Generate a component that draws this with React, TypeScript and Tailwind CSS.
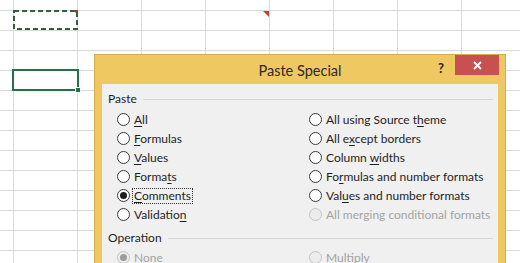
import React from "react";

type Item = { label: React.ReactNode; checked?: boolean; disabled?: boolean; focus?: boolean };

function Radio({ checked, disabled }: { checked?: boolean; disabled?: boolean }) {
  return (
    <span
      className={`flex h-[13px] w-[13px] shrink-0 items-center justify-center rounded-full border ${
        disabled ? "border-[#c4c4c4] bg-[#ececec]" : "border-[#3a3a3a] bg-white"
      }`}
    >
      {checked && (
        <span className={`h-[7px] w-[7px] rounded-full ${disabled ? "bg-[#9c9c9c]" : "bg-[#1c1c1c]"}`} />
      )}
    </span>
  );
}

function Option({ item }: { item: Item }) {
  return (
    <div className="flex h-[19px] items-center gap-[4px] whitespace-nowrap">
      <Radio checked={item.checked} disabled={item.disabled} />
      <span
        className={`leading-[14px] ${item.disabled ? "text-[#a3a3a3]" : "text-[#1e1e1e]"} ${
          item.focus ? "outline outline-1 outline-dotted outline-[#333] outline-offset-0 px-[1px] -ml-[1px]" : ""
        }`}
      >
        {item.label}
      </span>
    </div>
  );
}

function GroupHeading({ children }: { children: React.ReactNode }) {
  return (
    <div className="flex h-[16px] items-center gap-[6px] pl-[6px] pr-[5px]">
      <span className="whitespace-nowrap leading-[16px] text-[#1e1e1e]">{children}</span>
      <span className="h-px flex-1 bg-[#d5d5d5]" />
    </div>
  );
}

const U = ({ children }: { children: React.ReactNode }) => (
  <span className="underline decoration-1 underline-offset-[2px]">{children}</span>
);

const left: Item[] = [
  { label: <><U>A</U>ll</> },
  { label: <><U>F</U>ormulas</> },
  { label: <><U>V</U>alues</> },
  { label: <>Forma<U>t</U>s</> },
  { label: <><U>C</U>omments</>, checked: true, focus: true },
  { label: <>Validatio<U>n</U></> },
];

const right: Item[] = [
  { label: <>All using Source t<U>h</U>eme</> },
  { label: <>All e<U>x</U>cept borders</> },
  { label: <>Column <U>w</U>idths</> },
  { label: <>Fo<U>r</U>mulas and number formats</> },
  { label: <>Val<U>u</U>es and number formats</> },
  { label: <>All merging conditional formats</>, disabled: true },
];

export default function App() {
  return (
    <div className="relative h-[263px] w-[520px] overflow-hidden bg-white bg-[linear-gradient(to_right,#d9d9d9_1px,transparent_1px),linear-gradient(to_bottom,#d9d9d9_1px,transparent_1px)] bg-[length:64px_20px] bg-[position:13px_10px] font-['Lato',sans-serif] text-[12px]">
      {/* copied cell with marching ants */}
      <svg className="absolute left-[12px] top-[9px]" width="68" height="22" viewBox="0 0 68 22">
        <rect x="2" y="2" width="63" height="18" fill="none" stroke="#2f5f40" strokeWidth="2" strokeDasharray="5 3" />
        <polygon points="61,1 66,1 66,6" fill="#7a4b2c" />
      </svg>
      {/* comment indicator */}
      <svg className="absolute left-[263px] top-[11px]" width="6" height="6" viewBox="0 0 6 6">
        <polygon points="0,0 6,0 6,6" fill="#d23a3a" />
      </svg>
      {/* active cell */}
      <div className="absolute left-[12px] top-[69px] h-[22px] w-[67px] border-2 border-[#217346] bg-white" />
      <div className="absolute left-[75px] top-[87px] h-[6px] w-[6px] border border-white bg-[#217346]" />

      {/* dialog */}
      <div className="absolute left-[94px] top-[54px] flex h-[230px] w-[412px] flex-col border border-[#d6ad4c] bg-[#f0c862]">
        <div className="relative flex h-[29px] shrink-0 items-center justify-center">
          <span className="pt-[2px] text-[14.5px] leading-[20px] text-[#2b2b2b]">Paste Special</span>
          <span className="absolute right-[61px] top-[5px] text-[13px] font-bold leading-[16px] text-[#222]">?</span>
          <div className="absolute right-[6px] top-0 flex h-[20px] w-[44px] items-center justify-center bg-[#c75050]">
            <svg width="9" height="9" viewBox="0 0 9 9">
              <path d="M1 1L8 8M8 1L1 8" stroke="white" strokeWidth="1.8" />
            </svg>
          </div>
        </div>
        <div className="mx-[7px] flex-1 bg-[#f0f0f0] pt-[7px]">
          <GroupHeading>Paste</GroupHeading>
          <div className="mt-[3px] grid grid-cols-[192px_1fr] pl-[15px]">
            <div className="flex flex-col">
              {left.map((it, i) => (
                <Option key={i} item={it} />
              ))}
            </div>
            <div className="flex flex-col">
              {right.map((it, i) => (
                <Option key={i} item={it} />
              ))}
            </div>
          </div>
          <div className="mt-[6px]">
            <GroupHeading>Operation</GroupHeading>
          </div>
          <div className="mt-[2px] grid grid-cols-[192px_1fr] pl-[15px]">
            <Option item={{ label: "None", checked: true, disabled: true }} />
            <Option item={{ label: "Multiply", disabled: true }} />
          </div>
        </div>
      </div>
    </div>
  );
}
